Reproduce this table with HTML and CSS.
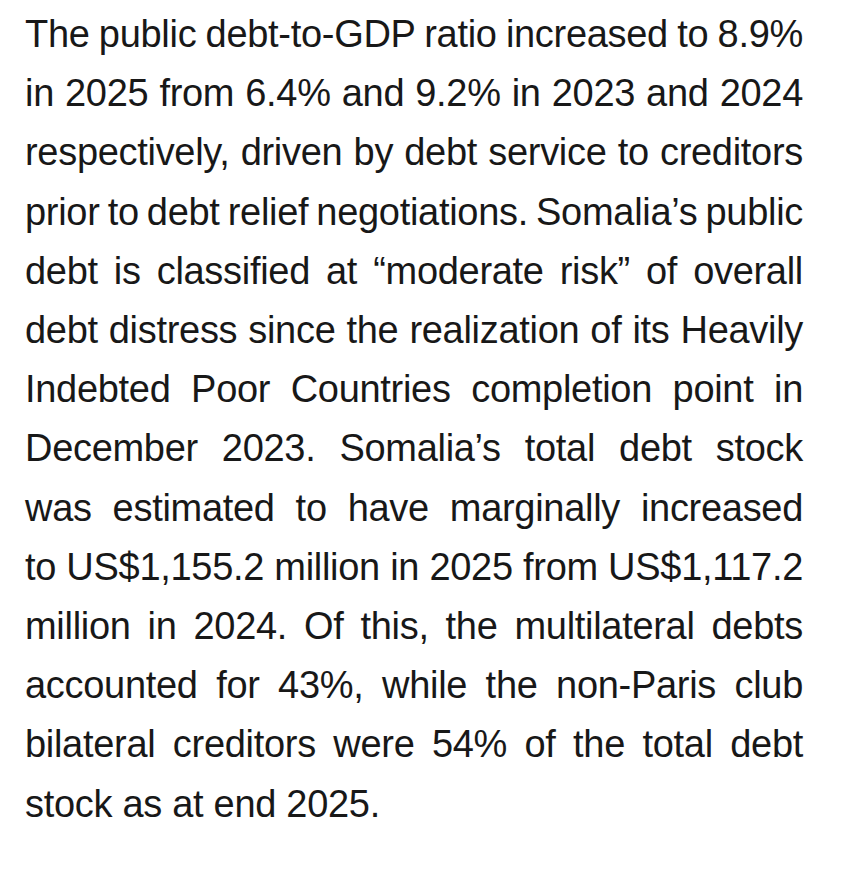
FILE: index.html
```html
<!DOCTYPE html>
<html>
<head>
<meta charset="utf-8">
<link rel="stylesheet" href="styles.css">
</head>
<body>
<div class="page">
  <p class="para">
    <span class="line tight">The public debt-to-GDP ratio increased to 8.9%</span>
    <span class="line">in 2025 from 6.4% and 9.2% in 2023 and 2024</span>
    <span class="line">respectively, driven by debt service to creditors</span>
    <span class="line tight">prior to debt relief negotiations. Somalia’s public</span>
    <span class="line">debt is classified at “moderate risk” of overall</span>
    <span class="line">debt distress since the realization of its Heavily</span>
    <span class="line">Indebted Poor Countries completion point in</span>
    <span class="line">December 2023. Somalia’s total debt stock</span>
    <span class="line">was estimated to have marginally increased</span>
    <span class="line">to US$1,155.2 million in 2025 from US$1,117.2</span>
    <span class="line">million in 2024. Of this, the multilateral debts</span>
    <span class="line">accounted for 43%, while the non-Paris club</span>
    <span class="line">bilateral creditors were 54% of the total debt</span>
    <span class="line last">stock as at end 2025.</span>
  </p>
</div>
</body>
</html>
```
FILE: styles.css
```css
html, body {
  margin: 0;
  padding: 0;
  background: #ffffff;
}
.page {
  width: 846px;
  height: 872px;
  box-sizing: border-box;
  padding: 5px 43px 0 25px;
}
.para {
  margin: 0;
  font-family: "Liberation Sans", Arial, sans-serif;
  font-size: 38px;
  line-height: 59.2px;
  letter-spacing: -0.3px;
  color: #181818;
}
.line {
  display: block;
  text-align: justify;
  text-align-last: justify;
  white-space: nowrap;
}
.line.tight {
  word-spacing: -2.5px;
}
.line.last {
  text-align-last: left;
}
```
